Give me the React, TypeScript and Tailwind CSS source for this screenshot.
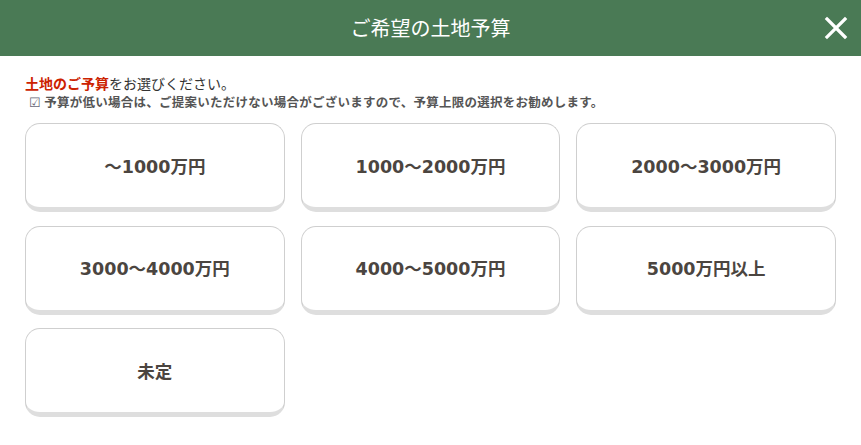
const OPTIONS = [
  "～1000万円",
  "1000～2000万円",
  "2000～3000万円",
  "3000～4000万円",
  "4000～5000万円",
  "5000万円以上",
  "未定",
];

export default function App() {
  return (
    <div className="h-[445px] w-[861px] bg-white font-['Noto_Sans_CJK_JP','Noto_Sans',sans-serif]">
      <header className="relative flex h-14 items-center justify-center bg-[#4a7a55]">
        <h1 className="text-[20px] text-white">ご希望の土地予算</h1>
        <button
          type="button"
          aria-label="閉じる"
          className="absolute right-[13px] top-[16px] flex h-6 w-6 items-center justify-center"
        >
          <svg viewBox="0 0 24 24" className="h-6 w-6" fill="none" stroke="white" strokeWidth="3.2" strokeLinecap="square">
            <path d="M3 3 L21 21 M21 3 L3 21" />
          </svg>
        </button>
      </header>

      <section className="px-[25px] pt-[17px]">
        <p className="text-[14px] leading-[20px] text-[#333]">
          <span className="font-bold text-[#cc2200]">土地のご予算</span>をお選びください。
        </p>
        <p className="flex items-center gap-[3px] pl-[4px] text-[12.5px] font-bold leading-[17px] tracking-[0.25px] text-[#555]">
          <span className="text-[13px] font-normal text-[#667]">☑</span>
          予算が低い場合は、ご提案いただけない場合がございますので、予算上限の選択をお勧めします。
        </p>

        <div className="mt-[13px] grid grid-cols-3 gap-x-4 gap-y-[13.5px]">
          {OPTIONS.map((label) => (
            <button
              type="button"
              key={label}
              className="flex h-[89px] items-center justify-center rounded-[15px] border border-b-[5px] border-[#cfcfcf] border-b-[#dedede] bg-white pt-[3px] font-['DejaVu_Sans','Noto_Sans_CJK_JP',sans-serif] text-[17.5px] font-bold text-[#4b4540]"
            >
              {label}
            </button>
          ))}
        </div>
      </section>
    </div>
  );
}
